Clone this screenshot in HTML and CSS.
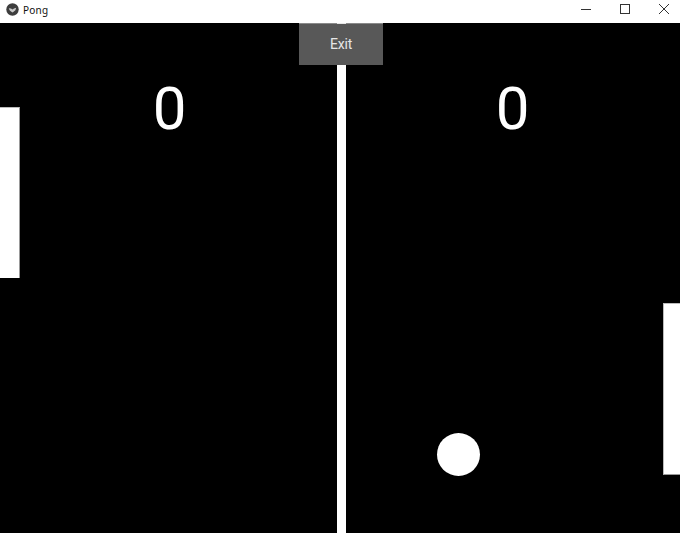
FILE: index.html
```html
<!DOCTYPE html>
<html lang="en">
<head>
<meta charset="utf-8">
<title>Pong</title>
<link rel="stylesheet" href="styles.css">
</head>
<body>
<div class="titlebar">
  <svg class="app-icon" viewBox="0 0 13 13" width="13" height="13"><circle cx="6.5" cy="6.5" r="6.2" fill="#3d3d3d"/><path d="M2.8 5.2 L5 5.4 L6.5 6.4 L8 5.4 L10.2 4.8 L9.4 7.2 L7.6 8.8 L6.5 9.4 L5 8.4 L3.6 7.2 Z" fill="#c9c9c9"/></svg>
  <span class="title">Pong</span>
  <div class="controls">
    <svg viewBox="0 0 10 10" width="10" height="10" class="ctl"><path d="M0 5.5H10" stroke="#333" stroke-width="1"/></svg>
    <svg viewBox="0 0 10 10" width="10" height="10" class="ctl"><rect x=".5" y=".5" width="9" height="9" fill="none" stroke="#333" stroke-width="1"/></svg>
    <svg viewBox="0 0 10 10" width="10" height="10" class="ctl"><path d="M0 0L10 10M10 0L0 10" stroke="#333" stroke-width="1"/></svg>
  </div>
</div>
<main class="game">
  <div class="net"></div>
  <div class="score score-left">0</div>
  <div class="score score-right">0</div>
  <div class="paddle paddle-left"></div>
  <div class="paddle paddle-right"></div>
  <div class="ball"></div>
  <button class="exit">Exit</button>
</main>
</body>
</html>
```
FILE: styles.css
```css
* { box-sizing: border-box; }
html, body { margin: 0; height: 100%; overflow: hidden; background: #000; }
body { display: flex; flex-direction: column; font-family: Roboto, "Liberation Sans", sans-serif; }
.titlebar { height: 23px; flex: none; background: #fff; display: flex; align-items: center; padding-left: 6px; }
.app-icon { flex: none; margin-bottom: 5px; }
.title { margin-left: 4px; font: 10px/1 "Noto Sans", "Open Sans", sans-serif; color: #111; letter-spacing: .25px; margin-bottom: 3px; }
.controls { margin-left: auto; display: flex; margin-bottom: 5px; padding-right: 11px; gap: 29px; }
.ctl { display: block; }
.game { position: relative; flex: 1; background: #000; overflow: hidden; }
.net { position: absolute; left: 337px; top: 0; width: 9px; bottom: 0; background: #fff; }
.score { position: absolute; top: 50px; width: 80px; text-align: center; color: #fff; font-size: 60px; line-height: 72px; font-weight: 400; }
.score-left { left: 129.5px; }
.score-right { left: 472.5px; }
.paddle { position: absolute; width: 20px; height: 171px; background: #fff; }
.paddle-left { left: 0; top: 84px; border-top: 1px solid #bbb; border-right: 1px solid #999; }
.paddle-right { right: -3px; top: 280px; height: 172px; border-top: 1px solid #bbb; border-bottom: 1px solid #999; border-left: 1px solid #bbb; }
.ball { position: absolute; left: 437px; top: 410px; width: 43px; height: 43px; border-radius: 50%; background: #fff; }
.exit { position: absolute; left: 299px; top: 0; width: 84px; height: 42px; padding: 0; border: 0; background: #585858; color: #e6e6e6; font: 14px Roboto, sans-serif; letter-spacing: -.2px; }
.exit::before { content: ""; position: absolute; left: 0; right: 0; top: 0; height: 1px; background: linear-gradient(to right, #8a8a8a 38px, #e8e8e8 38px, #e8e8e8 47px, #8a8a8a 47px); }
```
